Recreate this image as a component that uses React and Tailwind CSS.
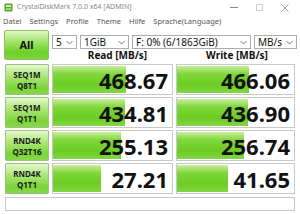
import React from "react";

const rows = [
  { a: "SEQ1M", b: "Q8T1", read: "468.67", write: "466.06", rw: 73, ww: 72 },
  { a: "SEQ1M", b: "Q1T1", read: "434.81", write: "436.90", rw: 72, ww: 71 },
  { a: "RND4K", b: "Q32T16", read: "255.13", write: "256.74", rw: 68, ww: 67 },
  { a: "RND4K", b: "Q1T1", read: "27.21", write: "41.65", rw: 48, ww: 51 },
];

const Select = ({ w, children }) => (
  <div
    className={`${w} h-[14px] border border-[#acacac] bg-white flex items-center justify-between pl-[3px] pr-[3px] text-[10px] leading-none text-[#111]`}
  >
    <span>{children}</span>
    <svg width="7" height="5" viewBox="0 0 7 5">
      <path d="M0.5 1 L3.5 4 L6.5 1" fill="none" stroke="#555" strokeWidth="0.8" />
    </svg>
  </div>
);

const ValueCell = ({ value, width }) => (
  <div className="relative h-full border border-[#c8c8c8] bg-white">
    <div
      className="absolute left-0 top-[1px] bottom-[1px] bg-[linear-gradient(to_bottom,#c9ee9e_0%,#7fd63a_30%,#6ccc22_70%,#82d646_100%)]"
      style={{ width: `${width}px` }}
    />
    <div className="relative h-full flex items-center justify-end pr-[4px] text-[22px] font-bold leading-none text-[#111]">
      {value}
    </div>
  </div>
);

export default function App() {
  return (
    <div className="w-[300px] h-[214px] bg-white overflow-hidden font-['Noto_Sans','Open_Sans',sans-serif]">
      {/* title bar */}
      <div className="h-[15px] flex items-center pl-[4px] text-[7px] text-[#8a8a8a]">
        <svg width="9" height="9" viewBox="0 0 9 9" className="mr-[4px]">
          <rect x="0.5" y="0.5" width="8" height="8" rx="1" fill="#5aa532" />
          <rect x="2" y="2" width="5" height="2" fill="#cfeeb5" />
          <rect x="2" y="5" width="5" height="2" fill="#9fd97a" />
        </svg>
        <span>CrystalDiskMark 7.0.0 x64 [ADMIN]</span>
        <div className="ml-auto flex items-center gap-[18px] pr-[11px]">
          <div className="w-[8px] h-[1px] bg-[#8a8a8a]" />
          <div className="w-[7px] h-[7px] border border-[#d0d0d0]" />
          <svg width="8" height="8" viewBox="0 0 8 8">
            <path d="M0.5 0.5 L7.5 7.5 M7.5 0.5 L0.5 7.5" stroke="#8a8a8a" strokeWidth="0.8" />
          </svg>
        </div>
      </div>

      {/* menu */}
      <div className="h-[13px] flex items-center gap-[8px] pl-[3px] text-[7.5px] text-[#555]">
        <span>Datei</span>
        <span>Settings</span>
        <span>Profile</span>
        <span>Theme</span>
        <span>Hilfe</span>
        <span>Sprache(Language)</span>
      </div>

      {/* top controls */}
      <div className="mt-[2px] flex pl-[4px]">
        <div className="w-[45px] h-[30px] border border-[#8fbf6a] rounded-[2px] bg-[linear-gradient(to_bottom,#dff7c8_0%,#a6e670_35%,#6fcf28_75%,#7dd63c_100%)] flex items-center justify-center text-[11px] font-bold text-[#111]">
          All
        </div>
        <div className="ml-[3px] flex flex-col">
          <div className="mt-[5px] flex gap-[3px]">
            <Select w="w-[25px]">5</Select>
            <Select w="w-[49px]">1GiB</Select>
            <Select w="w-[119px]">F: 0% (6/1863GiB)</Select>
            <Select w="w-[43px]">MB/s</Select>
          </div>
          <div className="flex h-[11px] items-end text-[10px] font-bold text-[#111] leading-none">
            <div className="w-[121px] text-center pl-[10px]">Read [MB/s]</div>
            <div className="w-[122px] text-center pl-[6px]">Write [MB/s]</div>
          </div>
        </div>
      </div>

      {/* result rows */}
      <div className="mt-[4px] flex flex-col gap-[2px] pl-[5px]">
        {rows.map((r, i) => (
          <div key={i} className="h-[31px] grid grid-cols-[44px_121px_119px] gap-x-[3px]">
            <div className="border border-[#9cc47e] rounded-[1px] bg-[linear-gradient(to_bottom,#e3f8cf_0%,#a9e676_40%,#7ad436_80%,#86d84a_100%)] flex flex-col items-center justify-center text-[8px] font-bold leading-[11px] text-[#1a1a1a]">
              <span>{r.a}</span>
              <span>{r.b}</span>
            </div>
            <ValueCell value={r.read} width={r.rw} />
            <ValueCell value={r.write} width={r.ww} />
          </div>
        ))}
      </div>

      {/* comment */}
      <div className="mt-[3px] ml-[5px] w-[290px] h-[14px] border border-[#c8c8c8] bg-white" />
    </div>
  );
}
